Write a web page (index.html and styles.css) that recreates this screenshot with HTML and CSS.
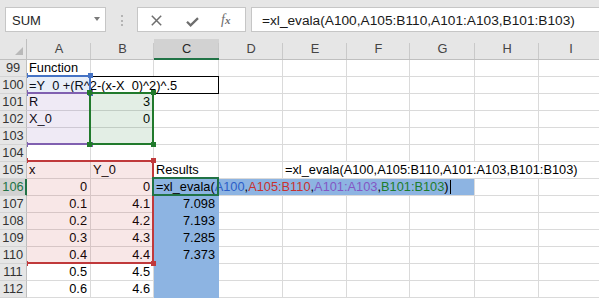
FILE: index.html
```html
<!DOCTYPE html>
<html>
<head>
<meta charset="utf-8">
<link rel="stylesheet" href="styles.css">
</head>
<body>
<div class="topbar">
  <div class="namebox"><span>SUM</span><span class="nb-caret"></span></div>
  <div class="grip"><i></i><i></i><i></i></div>
  <div class="fxbox">
    <svg class="ic-x" width="11" height="11" viewBox="0 0 11 11"><path d="M0.8 0.8 L10.2 10.2 M10.2 0.8 L0.8 10.2" stroke="#6e6e6e" stroke-width="1.5" fill="none"/></svg>
    <svg class="ic-ok" width="13" height="10" viewBox="0 0 13 10"><path d="M1 4.8 L4.6 8.3 L12 1.2" stroke="#6e6e6e" stroke-width="2.3" fill="none"/></svg>
    <span class="ic-fx"><i>f</i><span>x</span></span>
  </div>
  <div class="formula">=xl_evala(A100,A105:B110,A101:A103,B101:B103)</div>
</div>

<div class="sheet">
  <div class="grid">
    <div class="corner"><span class="tri"></span></div>
    <div class="ch">A</div><div class="ch">B</div><div class="ch sel">C</div><div class="ch">D</div><div class="ch">E</div><div class="ch">F</div><div class="ch">G</div><div class="ch">H</div><div class="ch">I</div>

    <div class="rh">99</div>
    <div class="c">Function</div><div class="c"></div><div class="c"></div><div class="c"></div><div class="c"></div><div class="c"></div><div class="c"></div><div class="c"></div><div class="c"></div>

    <div class="rh">100</div>
    <div class="c span3 low">=Y_0 +(R^2-(x-X_0)^2)^.5</div><div class="c"></div><div class="c"></div><div class="c"></div><div class="c"></div><div class="c"></div><div class="c"></div>

    <div class="rh">101</div>
    <div class="c">R</div><div class="c r">3</div><div class="c"></div><div class="c"></div><div class="c"></div><div class="c"></div><div class="c"></div><div class="c"></div><div class="c"></div>

    <div class="rh">102</div>
    <div class="c">X_0</div><div class="c r">0</div><div class="c"></div><div class="c"></div><div class="c"></div><div class="c"></div><div class="c"></div><div class="c"></div><div class="c"></div>

    <div class="rh">103</div>
    <div class="c"></div><div class="c"></div><div class="c"></div><div class="c"></div><div class="c"></div><div class="c"></div><div class="c"></div><div class="c"></div><div class="c"></div>

    <div class="rh">104</div>
    <div class="c"></div><div class="c"></div><div class="c"></div><div class="c"></div><div class="c"></div><div class="c"></div><div class="c"></div><div class="c"></div><div class="c"></div>

    <div class="rh">105</div>
    <div class="c">x</div><div class="c">Y_0</div><div class="c">Results</div><div class="c"></div><div class="c span5">=xl_evala(A100,A105:B110,A101:A103,B101:B103)</div>

    <div class="rh sel">106</div>
    <div class="c r">0</div><div class="c r">0</div><div class="c span5 edit">=xl_evala(<span class="fb">A100</span>,<span class="fr">A105:B110</span>,<span class="fp">A101:A103</span>,<span class="fg">B101:B103</span>)<span class="cur"></span></div><div class="c"></div><div class="c"></div>

    <div class="rh">107</div>
    <div class="c r">0.1</div><div class="c r">4.1</div><div class="c r fill">7.098</div><div class="c"></div><div class="c"></div><div class="c"></div><div class="c"></div><div class="c"></div><div class="c"></div>

    <div class="rh">108</div>
    <div class="c r">0.2</div><div class="c r">4.2</div><div class="c r fill">7.193</div><div class="c"></div><div class="c"></div><div class="c"></div><div class="c"></div><div class="c"></div><div class="c"></div>

    <div class="rh">109</div>
    <div class="c r">0.3</div><div class="c r">4.3</div><div class="c r fill">7.285</div><div class="c"></div><div class="c"></div><div class="c"></div><div class="c"></div><div class="c"></div><div class="c"></div>

    <div class="rh">110</div>
    <div class="c r">0.4</div><div class="c r">4.4</div><div class="c r fill">7.373</div><div class="c"></div><div class="c"></div><div class="c"></div><div class="c"></div><div class="c"></div><div class="c"></div>

    <div class="rh">111</div>
    <div class="c r">0.5</div><div class="c r">4.5</div><div class="c fill"></div><div class="c"></div><div class="c"></div><div class="c"></div><div class="c"></div><div class="c"></div><div class="c"></div>

    <div class="rh">112</div>
    <div class="c r">0.6</div><div class="c r">4.6</div><div class="c fill"></div><div class="c"></div><div class="c"></div><div class="c"></div><div class="c"></div><div class="c"></div><div class="c"></div>
  </div>

  <div class="ov">
    <div class="box-black"></div>
    <div class="rng rng-blue"><i class="h tl"></i><i class="h tr"></i><i class="h bl"></i><i class="h br"></i></div>
    <div class="rng rng-red"><i class="h tl"></i><i class="h tr"></i><i class="h bl"></i><i class="h br"></i></div>
    <div class="rng rng-purple"><i class="h tl"></i><i class="h tr"></i><i class="h bl"></i><i class="h br"></i></div>
    <div class="rng rng-green"><i class="h tl"></i><i class="h tr"></i><i class="h bl"></i><i class="h br"></i></div>
    <div class="active"></div>
  </div>
</div>
</body>
</html>
```

FILE: styles.css
```css
* { box-sizing: border-box; }
html, body { margin: 0; padding: 0; }
body {
  width: 599px;
  height: 298px;
  overflow: hidden;
  background: #fff;
  font-family: "Liberation Sans", Arial, sans-serif;
  color: #000;
}

/* ---------- top bar ---------- */
.topbar {
  height: 39px;
  background: #e6e6e6;
  display: flex;
  align-items: flex-start;
  padding: 7px 0 0 5px;
}
.namebox {
  width: 101px;
  height: 25px;
  flex: none;
  background: #fff;
  border: 1px solid #c6c6c6;
  display: flex;
  align-items: center;
  justify-content: space-between;
  padding: 1px 5px 0 6px;
  font-size: 13px;
  color: #262626;
}
.nb-caret {
  width: 0;
  height: 0;
  border-left: 3.5px solid transparent;
  border-right: 3.5px solid transparent;
  border-top: 4px solid #7a7a7a;
  margin-top: -2px;
}
.grip {
  flex: none;
  margin: 8px 0 0 15px;
  display: flex;
  flex-direction: column;
  gap: 2.5px;
}
.grip i {
  display: block;
  width: 2px;
  height: 2px;
  background: #b4b4b4;
}
.fxbox {
  flex: none;
  margin-left: 14px;
  width: 109px;
  height: 25px;
  background: #fff;
  border: 1px solid #c6c6c6;
  display: flex;
  align-items: center;
  padding-left: 13px;
}
.ic-x { margin-top: 2px; }
.ic-ok { margin-left: 24px; margin-top: 4px; }
.ic-fx {
  margin-left: 22px;
  font-family: "Liberation Serif", "Times New Roman", serif;
  font-style: italic;
  font-size: 14px;
  color: #6e6e6e;
  margin-top: 1px;
}
.ic-fx i { font-style: italic; }
.ic-fx span { font-size: 11px; font-weight: bold; }
.formula {
  flex: 1;
  margin-left: 5px;
  height: 25px;
  background: #fff;
  border: 1px solid #c6c6c6;
  border-right: none;
  font-size: 13.7px;
  line-height: 23px;
  padding: 1px 0 0 10px;
  white-space: nowrap;
  color: #1a1a1a;
}

/* ---------- sheet ---------- */
.sheet { position: relative; }
.grid {
  display: grid;
  grid-template-columns: 27px 64px 63px 65px 64px 64px 63px 65px 64px 64px;
  grid-template-rows: 21px repeat(14, 17px);
  font-size: 12.8px;
}
.corner {
  background: #e6e6e6;
  border-right: 1px solid #bfbfbf;
  border-bottom: 1px solid #bfbfbf;
  display: flex;
  justify-content: flex-end;
  align-items: flex-end;
  padding: 0 3px 4px 0;
}
.tri {
  width: 0;
  height: 0;
  border-left: 8px solid transparent;
  border-bottom: 8px solid #b9b9b9;
}
.ch {
  background: #e6e6e6 linear-gradient(#c9c9c9, #c9c9c9) no-repeat right bottom / 1px 16px;
  border-bottom: 1px solid #bfbfbf;
  text-align: center;
  line-height: 20px;
  color: #444;
}
.ch.sel {
  background-color: #d2d2d2;
  border-bottom-color: #217346;
  box-shadow: inset 0 -1px 0 #217346;
  color: #262626;
}
.rh {
  background: #e6e6e6;
  border-right: 1px solid #bfbfbf;
  border-bottom: 1px solid #d4d4d4;
  text-align: center;
  line-height: 16px;
  color: #333;
}
.rh.sel {
  background: #d2d2d2;
  color: #217346;
  border-right-color: #217346;
  box-shadow: inset -1px 0 0 #217346;
}
.c {
  border-right: 1px solid #dadada;
  border-bottom: 1px solid #dadada;
  padding: 0 3px 0 2px;
  line-height: 16px;
  white-space: nowrap;
  overflow: visible;
}
.c.low { padding-top: 1px; }
.r { text-align: right; }
.span3 { grid-column: span 3; }
.span5 { grid-column: span 5; }
.fill {
  background: #8db4e2;
  border-color: #8db4e2;
}
.edit { background: #8db4e2; }
.fb { color: #2c5fc8; }
.fr { color: #c8312f; }
.fp { color: #8456c4; }
.fg { color: #1d7d2c; }
.cur {
  display: inline-block;
  width: 1px;
  height: 14px;
  background: #000;
  vertical-align: -3px;
  margin-left: 1px;
}

/* ---------- reference overlays ---------- */
.ov {
  position: absolute;
  left: 27px;
  top: 21px;
  right: 0;
  bottom: 0;
  overflow: hidden;
  pointer-events: none;
}
.box-black {
  position: absolute;
  left: -1px;
  top: 16px;
  width: 193px;
  height: 18px;
  border: 1px solid #000;
}
.rng {
  position: absolute;
  border: 2px solid;
}
.h {
  position: absolute;
  width: 5px;
  height: 5px;
  background: currentColor;
}
.h.tl { left: -4px; top: -4px; }
.h.tr { right: -4px; top: -4px; }
.h.bl { left: -4px; bottom: -4px; }
.h.br { right: -4px; bottom: -4px; }
.rng-blue {
  left: -2px; top: 15px; width: 66px; height: 19px;
  color: #4472c4; border-color: #4472c4;
  background: rgba(68, 114, 196, 0.12);
}
.rng-purple {
  left: -2px; top: 32px; width: 66px; height: 53px;
  color: #8060b0; border-color: #8060b0;
  background: rgba(128, 96, 176, 0.13);
}
.rng-green {
  left: 62px; top: 32px; width: 65px; height: 53px;
  color: #217a2c; border-color: #217a2c;
  background: rgba(33, 122, 44, 0.125);
}
.rng-red {
  left: -2px; top: 100px; width: 129px; height: 104px;
  color: #c0393b; border-color: #c0393b;
  background: rgba(200, 60, 60, 0.12);
}
.active {
  position: absolute;
  left: 125px;
  top: 117px;
  width: 67px;
  height: 19px;
  border: 2px solid #217346;
}
```
